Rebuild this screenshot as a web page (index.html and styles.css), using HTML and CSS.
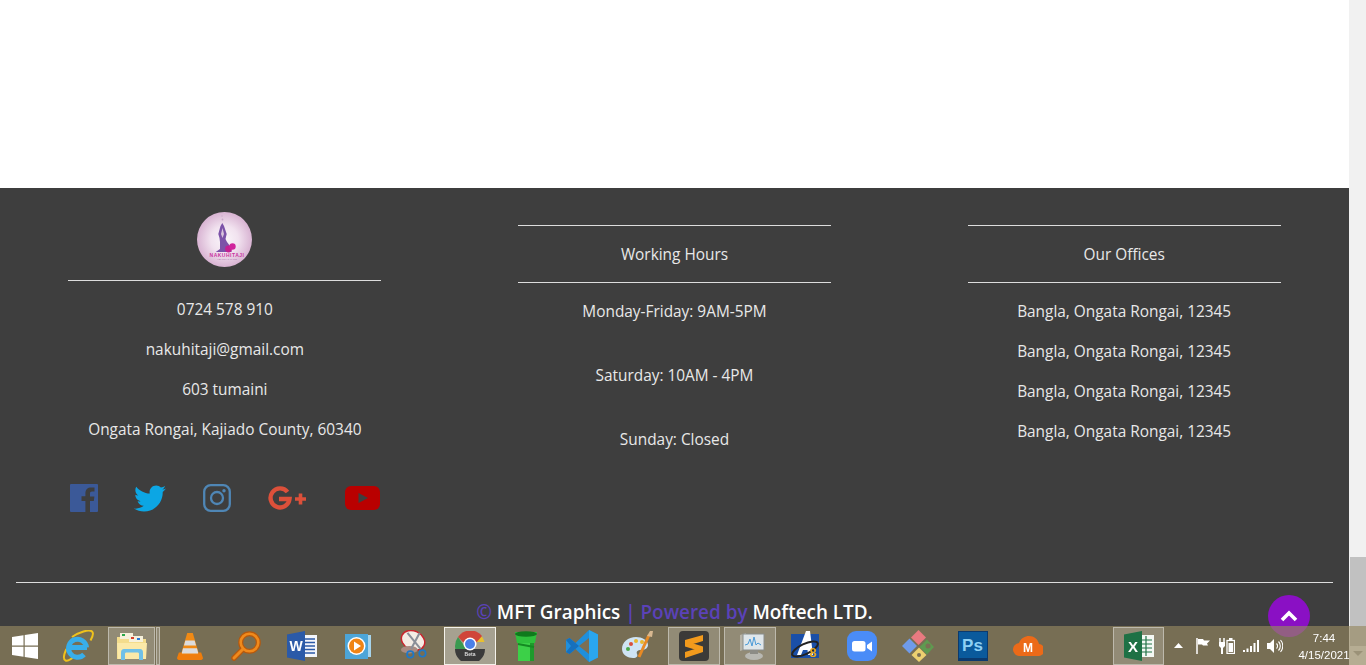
FILE: index.html
```html
<!DOCTYPE html>
<html lang="en">
<head>
<meta charset="utf-8">
<title>Nakuhitaji</title>
<link rel="stylesheet" href="styles.css">
</head>
<body>
<div class="page">
  <main class="content">
    <div class="blank"></div>
    <footer class="footer">
      <div class="columns">
        <section class="col">
          <svg class="logo" viewBox="0 0 55 55">
            <defs><radialGradient id="lg"><stop offset="0" stop-color="#faf5fa"/><stop offset=".5" stop-color="#f1e2ef"/><stop offset="1" stop-color="#d8b3d2"/></radialGradient></defs>
            <circle cx="27.500" cy="27.500" r="27.500" fill="url(#lg)"/>
            <path d="M25.300 11L27 14l2.700 8-1.200 5 1.500 3 3 4 1.700 6h-16l4.300-3 0-7-.5-4-1.200-4 2.200-8z" fill="#7c52a8"/>
            <path d="M25.500 16l-1.500 6 1.500 4 1.500-4z" fill="#d9c3dc"/>
            <circle cx="25" cy="4" r=".7" fill="#c8a8c8"/><circle cx="25.500" cy="7.500" r=".9" fill="#c8a8c8"/>
            <circle cx="31.500" cy="37" r="3.400" fill="#c41f92"/><circle cx="35.500" cy="34.500" r="3.200" fill="#d0249c"/>
            <text class="logo-name" x="30" y="44.500" text-anchor="middle">NAKUHITAJI</text>
            <text class="logo-sub" x="30" y="47.500" text-anchor="middle">HEALTH &amp; CARE</text>
          </svg>
          <hr class="rule">
          <p class="line">0724 578 910</p>
          <p class="line">nakuhitaji@gmail.com</p>
          <p class="line">603 tumaini</p>
          <p class="line">Ongata Rongai, Kajiado County, 60340</p>
          <div class="socials">
            <svg class="s-fb" viewBox="0 0 28 28"><path fill="#3b5998" d="M1 0h26a1 1 0 0 1 1 1v26a1 1 0 0 1-1 1h-7V17h3.800l.6-4.500H20V9.800c0-1.300.4-2.200 2.200-2.200h2.300v-4a30 30 0 0 0-3.400-.2c-3.400 0-5.700 2-5.700 5.800v3.100h-3.900V17h3.900v11H1a1 1 0 0 1-1-1V1a1 1 0 0 1 1-1z"/></svg>
            <svg class="s-tw" viewBox="0 40 512 432"><path fill="#0ca6e4" d="M459.370 151.716c.325 4.548.325 9.097.325 13.645 0 138.720-105.583 298.558-298.558 298.558-59.452 0-114.680-17.219-161.137-47.106 8.447.974 16.568 1.299 25.340 1.299 49.055 0 94.213-16.568 130.274-44.832-46.132-.975-84.792-31.188-98.112-72.772 6.498.974 12.995 1.624 19.818 1.624 9.421 0 18.843-1.300 27.614-3.573-48.081-9.747-84.143-51.980-84.143-102.985v-1.299c13.969 7.797 30.214 12.670 47.431 13.319-28.264-18.843-46.781-51.005-46.781-87.391 0-19.492 5.197-37.360 14.294-52.954 51.655 63.675 129.300 105.258 216.365 109.807-1.624-7.797-2.599-15.918-2.599-24.040 0-57.828 46.782-104.934 104.934-104.934 30.213 0 57.502 12.670 76.670 33.137 23.715-4.548 46.456-13.320 66.599-25.340-7.798 24.366-24.366 44.833-46.132 57.827 21.117-2.273 41.584-8.122 60.426-16.243-14.292 20.791-32.161 39.308-52.628 54.253z"/></svg>
            <svg class="s-ig" viewBox="0 0 28 28"><g fill="none" stroke="#4f86b5" stroke-width="2.300"><rect x="1.200" y="1.200" width="25.600" height="25.600" rx="6.500"/><circle cx="14" cy="14" r="6"/></g><circle cx="21" cy="6.800" r="1.700" fill="#4f86b5"/></svg>
            <svg class="s-gp" viewBox="0 0 39 24"><path d="M20.500 6A9.500 9.500 0 1 0 22.500 13H12" fill="none" stroke="#dc503a" stroke-width="4.400"/><path d="M33.500 7.500v11M28 13h11" stroke="#dc503a" stroke-width="3.600" fill="none"/></svg>
            <svg class="s-yt" viewBox="0 0 35 24"><rect width="35" height="24" rx="6" fill="#b90000"/><path d="M13.500 7l9.500 5-9.500 5z" fill="#3e3e3e"/></svg>
          </div>
        </section>
        <section class="col col-head">
          <hr class="rule">
          <h3 class="title">Working Hours</h3>
          <hr class="rule">
          <p class="line wide">Monday-Friday: 9AM-5PM</p>
          <p class="line wide">Saturday: 10AM - 4PM</p>
          <p class="line wide">Sunday: Closed</p>
        </section>
        <section class="col col-head">
          <hr class="rule">
          <h3 class="title">Our Offices</h3>
          <hr class="rule">
          <p class="line">Bangla, Ongata Rongai, 12345</p>
          <p class="line">Bangla, Ongata Rongai, 12345</p>
          <p class="line">Bangla, Ongata Rongai, 12345</p>
          <p class="line">Bangla, Ongata Rongai, 12345</p>
        </section>
      </div>
      <hr class="bottom-rule">
      <p class="copy"><span class="violet">©</span> MFT Graphics <span class="violet">| Powered by</span> Moftech LTD.</p>
    </footer>
  </main>
  <aside class="scrollbar"><div class="thumb"></div><div class="arrow"></div></aside>
</div>

<button class="to-top" aria-label="Back to top"><svg viewBox="0 0 18 12" width="18" height="12"><path d="M2 10l7-7 7 7" fill="none" stroke="#fff" stroke-width="3.600"/></svg></button>

<nav class="taskbar">
  <div class="start"><svg viewBox="0 0 26 26" width="26" height="26"><path fill="#fff" d="M0 4l11.500-1.700V12.500H0zM12.700 2.100L26 0v12.500H12.700zM0 13.700h11.500v10L0 22zM12.700 13.700H26V26l-13.300-2.100z"/></svg></div>
  <div class="slot"><svg viewBox="0 0 32 32" width="32" height="32"><path d="M4.500 19c-2.500 5-3.500 10-1 11.500 2 1 5-1 7.500-3M10 7C17 2 27-1 30 1.500c1.800 1.500.5 5.500-1.500 9" fill="none" stroke="#efc21c" stroke-width="2"/><path d="M8 17.500h17M24.500 17.500a9 9 0 1 0-2.500 7" fill="none" stroke="#38aeea" stroke-width="5"/></svg></div>
  <div class="slot active stack"><svg viewBox="0 0 32 30" width="32" height="30"><path d="M1 6h12l2 2h15v20H1z" fill="#f3dc8c"/><rect x="4" y="2" width="13" height="6" fill="#f6f1dc"/><rect x="6" y="3" width="3" height="2" fill="#2aa84a"/><rect x="13" y="5" width="14" height="6" fill="#f6f1dc"/><rect x="15" y="6" width="3" height="2" fill="#d8402c"/><rect x="21" y="7" width="3" height="2" fill="#2a7ad8"/><path d="M1 12h30l-1 16H2z" fill="#fbe9a8"/><path d="M5 22c0-3 1-4 3-4h16c2 0 3 1 3 4v7h-4v-6c0-1-.5-1.500-1.500-1.500h-11C9.500 21.500 9 22 9 23v6H5z" fill="#6fc0e8"/></svg></div>
  <div class="slot"><svg viewBox="0 0 28 30" width="26" height="30"><path d="M11 1h6l7 24H4z" fill="#f08a14"/><path d="M9 9h10l1.500 5.500H7.500zM6.500 17.500h15l1.500 5.500H5z" fill="#dcdcdc"/><path d="M2 22h3v2h18v-2h3l2 6c0 1-1 2-2 2H2c-1 0-2-1-2-2z" fill="#ef7d0c"/></svg></div>
  <div class="slot"><svg viewBox="0 0 30 30" width="30" height="30"><circle cx="18.500" cy="11.500" r="8.800" fill="none" stroke="#b8590c" stroke-width="5"/><path d="M12 18L3 27" stroke="#b8590c" stroke-width="5.500" stroke-linecap="round"/><circle cx="18.500" cy="11.500" r="8.800" fill="none" stroke="#f08a1c" stroke-width="2.600"/><path d="M12 18L3 27" stroke="#f08a1c" stroke-width="3" stroke-linecap="round"/></svg></div>
  <div class="slot"><svg viewBox="0 0 30 30" width="30" height="30"><path d="M12 4h18v22H12z" fill="#f4f6fb"/><path d="M18 8h10M18 11.500h10M18 15h10M18 18.500h10M18 22h10" stroke="#2b5aa8" stroke-width="1.500"/><path d="M0 3.500L18 0v30L0 26.500z" fill="#2b5aa8"/><text class="word-w" x="9" y="20" text-anchor="middle">W</text></svg></div>
  <div class="slot"><svg viewBox="0 0 26 28" width="26" height="28"><path d="M4 3h22v22H4z" fill="#a6d4ec"/><rect y="2" width="23" height="25" fill="#4ca5d8"/><circle cx="11.500" cy="14" r="9" fill="#fff"/><circle cx="11.500" cy="14" r="7.500" fill="#f08414"/><path d="M9 9.500l7 4.500-7 4.500z" fill="#fff"/></svg></div>
  <div class="slot"><svg viewBox="0 0 30 34" width="28" height="32"><ellipse cx="14" cy="11" rx="13" ry="10" fill="#f4ece4" stroke="#c9242c" stroke-width="1.600" transform="rotate(25 14 11)"/><ellipse cx="10" cy="21" rx="9" ry="4" fill="#a98c82"/><path d="M8 3l14 17M21 3L12 20" stroke="#8b8f98" stroke-width="2.200"/><circle cx="11" cy="26" r="3.500" fill="none" stroke="#1e78c8" stroke-width="1.800"/><circle cx="24" cy="25" r="3.500" fill="none" stroke="#1e78c8" stroke-width="1.800"/></svg></div>
  <div class="slot active strong"><svg viewBox="0 0 30 30" width="30" height="30"><path d="M15 0a15 15 0 0 1 14.500 11H15z" fill="#e8c030"/><path d="M3 6a15 15 0 0 1 24-1L21 12H9z" fill="#d0453a"/><path d="M3 6A15 15 0 0 0 0 15a15 15 0 0 0 1 5h12z" fill="#3a9a50"/><path d="M0 18h30a15 15 0 0 1-30 0z" fill="#3b3b3b"/><circle cx="15" cy="13" r="6.500" fill="#fff"/><circle cx="15" cy="13" r="5" fill="#4a80e8"/><text class="beta" x="15" y="25" text-anchor="middle">Beta</text></svg></div>
  <div class="slot"><svg viewBox="0 0 24 30" width="24" height="30"><path d="M4 11h16v19H4z" fill="#3cd048"/><path d="M16 11h4v19h-4z" fill="#1e9a2c"/><path d="M1 1h22l-2 11H3z" fill="#2fc03c"/><ellipse cx="12" cy="3" rx="11" ry="2.800" fill="#0f7a1c"/><path d="M4 13l16 3" stroke="#148a22" stroke-width="2"/></svg></div>
  <div class="slot"><svg viewBox="0 0 32 32" width="32" height="32"><path d="M23 0l9 4.500v23L23 32 9.500 19 3.500 24 0 22v-12l3.500-2 6 5z" fill="#1f8fdc"/><path d="M23 8L13 16l10 8z" fill="#7b6f55"/><path d="M23 0l9 4.500v23L23 32z" fill="#2aa6ef"/><path d="M0 10l3.500-2L13 16l-9.500 8L0 22l5-6z" fill="#1670bd"/></svg></div>
  <div class="slot"><svg viewBox="0 0 32 32" width="32" height="32"><path d="M14 7C6 7 0 12 0 19c0 6 6 9 11 9 4 0 5-2 4-4-1-3 1-4 4-4 4 0 7-2 7-5 0-5-6-8-12-8z" fill="#cfe4f4"/><circle cx="9" cy="14" r="2" fill="#d8503c"/><circle cx="14" cy="11" r="2" fill="#e8b830"/><circle cx="6" cy="19" r="2" fill="#4aa84a"/><circle cx="20" cy="12" r="2" fill="#e8b830"/><path d="M27 5L17 27" stroke="#e88a24" stroke-width="3"/><path d="M25 6l3-5 3 0-1 6z" fill="#d8b890"/></svg></div>
  <div class="slot active"><svg viewBox="0 0 30 30" width="30" height="30"><rect width="30" height="30" rx="4" fill="#3b3a38"/><path d="M6 9l18-5v6L6 15.500zM6 10l18 5.500V21L6 15.500zM6 21l18-5.500V21L6 27z" fill="#f29a1c"/></svg></div>
  <div class="slot active"><svg viewBox="0 0 30 30" width="30" height="30"><path d="M5 4l6-2v16l-6 2z" fill="#b8b4a8"/><rect x="8" y="3" width="21" height="16" fill="#dfe6ea" stroke="#8a8d8c"/><path d="M10 14l3-1 2-5 2 7 2-9 2 8 2-2 3 2" fill="none" stroke="#4a9ad8" stroke-width="1"/><ellipse cx="19" cy="25" rx="9" ry="4" fill="#b8b8b2"/><path d="M15 19h8v4h-8z" fill="#8c8c86"/></svg></div>
  <div class="slot"><svg viewBox="0 0 30 32" width="30" height="32"><rect y="4" width="28" height="24" fill="#1a4fa8"/><path d="M6 25L15 1h4l3 24h-5l-.5-5H12l-2 5z" fill="#fff"/><ellipse cx="14" cy="19" rx="14" ry="5" fill="none" stroke="#222" stroke-width="2" transform="rotate(-25 14 19)"/><text class="als-8" x="22" y="27" text-anchor="middle">8</text></svg></div>
  <div class="slot"><svg viewBox="0 0 30 30" width="30" height="30"><rect width="30" height="30" rx="9" fill="#4a8cf7"/><rect x="5" y="10" width="13.500" height="10.500" rx="2.500" fill="#fff"/><path d="M20 14l5-3.500v10L20 17z" fill="#fff"/></svg></div>
  <div class="slot"><svg viewBox="0 0 32 32" width="32" height="32"><path d="M16.500 0l7.500 7.500-7.500 7.500L9 7.500z" fill="#e87a80"/><path d="M7.500 8.500L15 16l-7.500 7.500L0 16z" fill="#6f9bea"/><path d="M25 9.500l7 7.500-7 7.500-7.500-7.500z" fill="#5f9a50"/><path d="M17 17.500l7.500 7.500-7.500 7-7.500-7z" fill="#ecd070"/><circle cx="26" cy="16" r="2.500" fill="#7b6f55"/><circle cx="17" cy="25" r="2" fill="#7b6f55"/></svg></div>
  <div class="slot shift-1"><svg viewBox="0 0 30 30" width="30" height="30"><rect width="30" height="30" fill="#0b3a6e"/><rect x="1" y="1" width="28" height="26" fill="#0a5a9c"/><text class="ps" x="14.500" y="20" text-anchor="middle">Ps</text></svg></div>
  <div class="slot shift-2"><svg viewBox="0 0 30 20" width="30" height="20"><path d="M7 20a6.500 6.500 0 0 1-1-13C8 2 12 0 16 0c5 0 9 3 10 8a6 6 0 0 1-1 12z" fill="#ec6a18"/><text class="mega" x="15" y="16" text-anchor="middle">M</text></svg></div>
  <div class="slot active excel"><svg viewBox="0 0 30 30" width="30" height="30"><rect x="15" y="4" width="15" height="22" fill="#f4f8f4"/><path d="M17 9h11M17 13h11M17 17h11M17 21h11M22 5v20" stroke="#217346" stroke-width="1.200"/><path d="M0 3.500L18 0v30L0 26.500z" fill="#1e7145"/><text class="xl" x="9" y="21" text-anchor="middle">X</text></svg></div>
  <div class="tray">
    <svg class="tray-arrow" viewBox="0 0 9 5" width="9" height="5"><path d="M4.500 0L9 5H0z" fill="#fff"/></svg>
    <svg viewBox="0 0 15 16" width="15" height="16"><path d="M1 0v16" stroke="#fff" stroke-width="1.500"/><path d="M2 1h5l1 1.500h6l-3 3 1 2H7L6 6.500H2z" fill="#fff"/></svg>
    <svg viewBox="0 0 16 16" width="16" height="16"><path d="M1 0v4M5 0v4" stroke="#fff" stroke-width="1.500"/><path d="M0 4h6v4l-2 2v6H2v-6L0 8z" fill="#fff"/><rect x="8" y="2.500" width="7.500" height="13" fill="none" stroke="#fff" stroke-width="1.300"/><rect x="10" y="0" width="3.500" height="2" fill="#fff"/><rect x="9.500" y="5" width="4.500" height="9" fill="#fff"/></svg>
    <svg viewBox="0 0 16 12" width="16" height="12"><path fill="#fff" d="M0 10h2v2H0zM3.500 8.500h2V12h-2zM7 6h2v6H7zM10.500 3h2v9h-2zM14 0h2v12h-2z"/></svg>
    <svg viewBox="0 0 16 14" width="16" height="14"><path fill="#fff" d="M0 4h3l4-4v14l-4-4H0z"/><path d="M9.500 4.500a3.500 3.500 0 0 1 0 5M11.500 2.500a6.500 6.500 0 0 1 0 9M13.500 1a9 9 0 0 1 0 12" fill="none" stroke="#fff" stroke-width="1.100"/></svg>
    <div class="clock"><span class="time">7:44</span><span class="date">4/15/2021</span></div>
  </div>
</nav>
</body>
</html>
```
FILE: styles.css
```css
html, body { margin: 0; padding: 0; height: 665px; overflow: hidden; }
body { font-family: "Open Sans", "Noto Sans", sans-serif; color: #e8e8e8; background: #fff; }
.page { display: flex; height: 665px; }
.content { width: 1349px; display: flex; flex-direction: column; }
.blank { height: 188px; background: #fff; flex: none; }
.footer { flex: 1; background: #3e3e3e; padding-top: 24px; }
.columns { display: grid; grid-template-columns: repeat(3, 1fr); height: 357px; padding-bottom: 13px; }
.col { display: flex; flex-direction: column; align-items: center; }
.col-head { padding-top: 13px; }
.rule { width: 313px; margin: 0; border: 0; border-top: 1px solid #ddd; flex: none; }
.logo { width: 55px; height: 55px; margin-bottom: 13px; flex: none; }
.logo-name { font: 700 5px "Liberation Sans", sans-serif; fill: #c9359f; letter-spacing: .5px; }
.logo-sub { font: 400 2.500px "Liberation Sans", sans-serif; fill: #b070b0; }
.line { margin: 16px 0 0; font-size: 15.400px; line-height: 26px; height: 24px; white-space: nowrap; }
.wide { margin-bottom: 24px; }
.wide + .wide { margin-top: 16px; }
.title { margin: 16px 0; font-size: 15.400px; line-height: 26px; height: 24px; font-weight: 400; }
.socials { width: 313px; height: 28px; margin-top: 43px; display: flex; align-items: center; padding-left: 2px; box-sizing: border-box; }
.socials svg { display: block; flex: none; }
.s-fb { width: 28px; height: 28px; }
.s-tw { width: 32px; height: 27px; margin-left: 36px; }
.s-ig { width: 28px; height: 28px; margin-left: 37px; }
.s-gp { width: 39px; height: 24px; margin-left: 36px; }
.s-yt { width: 35px; height: 24px; margin-left: 39px; }
.bottom-rule { margin: 0 16px; border: 0; border-top: 1px solid #ddd; }
.copy { margin: 14px 0 0; text-align: center; font-size: 18.900px; line-height: 30px; font-weight: 600; color: #fff; white-space: nowrap; }
.violet { color: #5b42b8; }
.scrollbar { width: 17px; background: #f1f1f1; position: relative; }
.thumb { position: absolute; left: 1px; right: 0; top: 557px; height: 89px; background: #c1c1c1; }
.arrow { position: absolute; left: 4px; top: 651px; width: 0; height: 0; border: 5px solid transparent; border-top-color: #a3a3a3; border-bottom: 0; }
.to-top { position: fixed; left: 1268px; top: 595px; width: 42px; height: 42px; border: 0; border-radius: 50%; background: #8a10c4; padding: 0; display: flex; align-items: center; justify-content: center; }
.taskbar { position: fixed; left: 0; right: 0; bottom: 0; height: 39px; background: rgba(151, 136, 97, .65); display: flex; align-items: center; }
.start { width: 50px; display: flex; justify-content: center; flex: none; }
.slot { width: 52px; height: 38px; margin: 0 2px; box-sizing: border-box; display: flex; align-items: center; justify-content: center; flex: none; border: 1px solid transparent; }
.slot svg { display: block; }
.active { background: rgba(255, 255, 255, .2); border: 1px solid rgba(255, 255, 255, .4); }
.strong { background: rgba(255, 255, 255, .35); border-color: #f4f2ea; }
.stack { width: 47px; margin-right: 7px; position: relative; }
.stack::after { content: ""; position: absolute; left: 47px; top: -1px; width: 4px; height: 38px; box-sizing: border-box; background: rgba(255, 255, 255, .2); border: 1px solid rgba(255, 255, 255, .4); }
.shift-1 svg { margin-right: 2px; }
.shift-2 svg { margin-right: 4px; }
.excel { margin-left: 55px; width: 51px; }
.word-w { font: 700 14px "Liberation Sans", sans-serif; fill: #fff; }
.beta { font: 700 5px "Liberation Sans", sans-serif; fill: #ddd; }
.als-8 { font: 700 13px "Liberation Sans", sans-serif; fill: #e8a820; }
.ps { font: 700 17px "Liberation Sans", sans-serif; fill: #8ed0f4; }
.mega { font: 700 12px "Liberation Sans", sans-serif; fill: #fff; }
.xl { font: 700 15px "Liberation Sans", sans-serif; fill: #fff; }
.tray { margin-left: auto; width: 192px; display: flex; align-items: center; gap: 8px; color: #fff; box-sizing: border-box; }
.tray-arrow { margin-right: 5px; }
.clock { margin-left: auto; display: flex; flex-direction: column; align-items: center; font: 11.500px/17px "Liberation Sans", sans-serif; color: #fff; width: 52px; margin-right: 16px; padding-top: 2px; }
```
